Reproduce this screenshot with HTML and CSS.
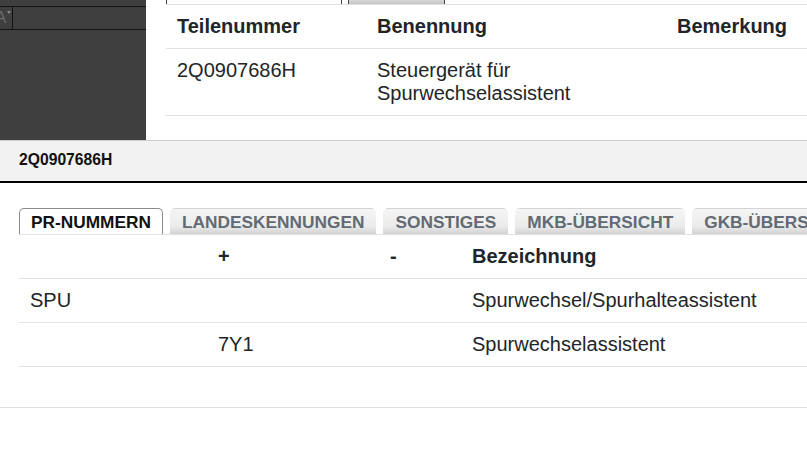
FILE: index.html
```html
<!DOCTYPE html>
<html lang="de">
<head>
<meta charset="utf-8">
<title>Teile</title>
<link rel="stylesheet" href="styles.css">
</head>
<body>
<div class="top">
  <aside class="sidebar">
    <div class="toolbar">
      <div class="fontbtn"><span class="fontA">A</span><span class="caret"></span></div>
    </div>
  </aside>
  <main class="main">
    <div class="toptabs">
      <div class="toptab toptab-active"></div>
      <div class="toptab toptab-gray"></div>
    </div>
    <table class="grid parts">
      <colgroup><col class="c1"><col class="c2"><col class="c3"></colgroup>
      <thead>
        <tr><th>Teilenummer</th><th>Benennung</th><th>Bemerkung</th></tr>
      </thead>
      <tbody>
        <tr><td>2Q0907686H</td><td>Steuergerät für<br>Spurwechselassistent</td><td></td></tr>
      </tbody>
    </table>
  </main>
</div>
<section class="panel">
  <header class="panel-head">2Q0907686H</header>
  <div class="panel-body">
    <ul class="tabs">
      <li class="tab active">PR-NUMMERN</li>
      <li class="tab">LANDESKENNUNGEN</li>
      <li class="tab">SONSTIGES</li>
      <li class="tab">MKB-ÜBERSICHT</li>
      <li class="tab">GKB-ÜBERSICHT</li>
    </ul>
    <table class="grid pr">
      <colgroup><col class="p1"><col class="p2"><col class="p3"><col class="p4"></colgroup>
      <thead>
        <tr><th></th><th>+</th><th>-</th><th>Bezeichnung</th></tr>
      </thead>
      <tbody>
        <tr><td>SPU</td><td></td><td></td><td>Spurwechsel/Spurhalteassistent</td></tr>
        <tr><td></td><td>7Y1</td><td></td><td>Spurwechselassistent</td></tr>
      </tbody>
    </table>
  </div>
  <div class="panel-foot"></div>
</section>
</body>
</html>
```
FILE: styles.css
```css
html, body {
  margin: 0;
  padding: 0;
  background: #ffffff;
  overflow: hidden;
}
body {
  width: 807px;
  height: 450px;
  font-family: "Liberation Sans", Arial, sans-serif;
  color: #212529;
}
.top {
  display: flex;
  height: 140px;
}
.sidebar {
  width: 146px;
  flex: none;
  background: #3f3f3f;
  padding-top: 6px;
  box-sizing: border-box;
}
.toolbar {
  height: 22px;
  border-top: 1px solid #141414;
  border-bottom: 1px solid #141414;
  display: flex;
}
.fontbtn {
  width: 12px;
  border-right: 1px solid #141414;
  position: relative;
  overflow: hidden;
}
.fontA {
  position: absolute;
  left: -5px;
  top: 2px;
  font-size: 17px;
  line-height: 18px;
  color: #6a6a6a;
}
.caret {
  position: absolute;
  left: 7px;
  top: 4px;
  width: 0;
  height: 0;
  border-left: 2px solid transparent;
  border-right: 2px solid transparent;
  border-top: 3px solid #8a8a8a;
}
.main {
  flex: 1;
  padding-left: 20px;
  overflow: hidden;
}
.toptabs {
  display: flex;
  gap: 6px;
  height: 4px;
}
.toptab {
  height: 4px;
  box-sizing: border-box;
  border-left: 1px solid #444;
  border-right: 1px solid #444;
}
.toptab-active {
  width: 176px;
  background: #fff;
}
.toptab-gray {
  width: 97px;
  background: linear-gradient(#d8d8d8, #c4c4c4);
}
.grid {
  border-collapse: collapse;
  table-layout: fixed;
  font-size: 20px;
  line-height: 23px;
}
.grid th, .grid td {
  padding: 10px 11px;
  text-align: left;
  vertical-align: top;
  border-bottom: 1px solid #dee2e6;
  white-space: nowrap;
}
.grid th {
  font-weight: bold;
}
.parts {
  width: 700px;
  border-top: 1px solid #dee2e6;
}
.parts .c1 { width: 200px; }
.parts .c2 { width: 300px; }
.parts .c3 { width: 200px; }
.panel {
  border-top: 1px solid #cfcfcf;
}
.panel-head {
  height: 40px;
  line-height: 38px;
  padding-left: 19px;
  background: #f2f2f2;
  font-size: 15.7px;
  font-weight: bold;
  color: #111;
  border-bottom: 2px solid #000;
}
.panel-body {
  padding: 25px 0 40px 19px;
}
.tabs {
  list-style: none;
  margin: 0;
  padding: 0;
  display: flex;
  gap: 7px;
  border-bottom: 1px solid #dee2e6;
  white-space: nowrap;
}
.tab {
  flex: none;
  height: 25px;
  line-height: 26px;
  padding: 0 11px;
  font-size: 17.3px;
  font-weight: bold;
  color: #626a73;
  border: 1px solid transparent;
  border-bottom: none;
  border-radius: 5px 5px 0 0;
  background: linear-gradient(#f5f5f5 0%, #ebebeb 70%, #d2d2d2 100%);
}
.tab.active {
  background: #fff;
  color: #111;
  border-color: #8c8c8c;
}
.pr {
  width: 800px;
}
.pr .p1 { width: 188px; }
.pr .p2 { width: 172px; }
.pr .p3 { width: 82px; }
.pr .p4 { width: 358px; }
.panel-foot {
  border-top: 1px solid #e0e0e0;
}
```
